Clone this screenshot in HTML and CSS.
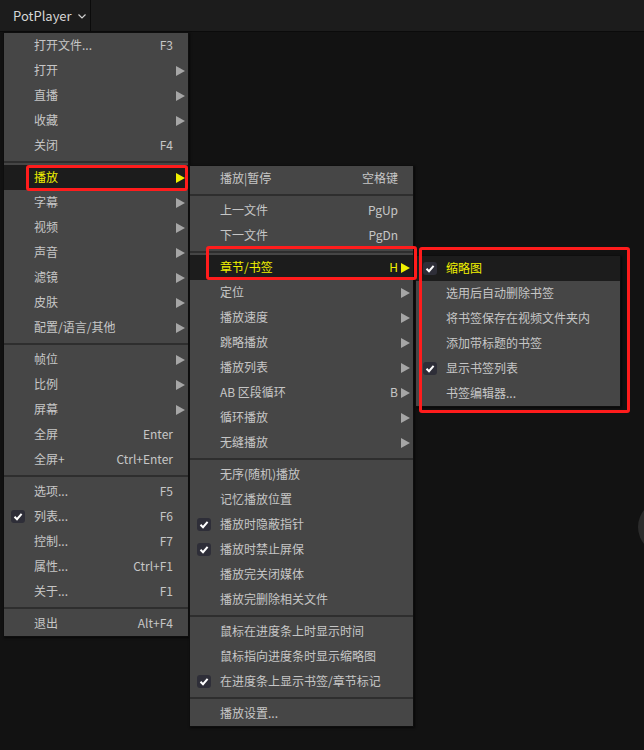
FILE: index.html
```html
<!DOCTYPE html>
<html lang="zh-CN">
<head>
<meta charset="utf-8">
<title>PotPlayer</title>
<link rel="stylesheet" href="styles.css">
</head>
<body>
<header class="topbar">
  <div class="app-btn"><span>PotPlayer</span><svg class="chev" width="8" height="5" viewBox="0 0 8 5"><path d="M0.5 0.5 L4 4 L7.5 0.5" fill="none" stroke="#d0d0d0" stroke-width="1.2"/></svg></div>
  <div class="topbar-rest"></div>
</header>

<div class="fab-clip"><div class="fab"></div></div>

<nav class="menu menu-main">
  <div class="item"><span class="chk"></span><span class="label">打开文件...</span><span class="key">F3</span><span class="sub"></span></div>
  <div class="item"><span class="chk"></span><span class="label">打开</span><span class="key"></span><span class="sub"><i class="arrow"></i></span></div>
  <div class="item"><span class="chk"></span><span class="label">直播</span><span class="key"></span><span class="sub"><i class="arrow"></i></span></div>
  <div class="item"><span class="chk"></span><span class="label">收藏</span><span class="key"></span><span class="sub"><i class="arrow"></i></span></div>
  <div class="item"><span class="chk"></span><span class="label">关闭</span><span class="key">F4</span><span class="sub"></span></div>
  <div class="sep"></div>
  <div class="item active"><span class="chk"></span><span class="label">播放</span><span class="key"></span><span class="sub"><i class="arrow"></i></span></div>
  <div class="item"><span class="chk"></span><span class="label">字幕</span><span class="key"></span><span class="sub"><i class="arrow"></i></span></div>
  <div class="item"><span class="chk"></span><span class="label">视频</span><span class="key"></span><span class="sub"><i class="arrow"></i></span></div>
  <div class="item"><span class="chk"></span><span class="label">声音</span><span class="key"></span><span class="sub"><i class="arrow"></i></span></div>
  <div class="item"><span class="chk"></span><span class="label">滤镜</span><span class="key"></span><span class="sub"><i class="arrow"></i></span></div>
  <div class="item"><span class="chk"></span><span class="label">皮肤</span><span class="key"></span><span class="sub"><i class="arrow"></i></span></div>
  <div class="item"><span class="chk"></span><span class="label">配置/语言/其他</span><span class="key"></span><span class="sub"><i class="arrow"></i></span></div>
  <div class="sep"></div>
  <div class="item"><span class="chk"></span><span class="label">帧位</span><span class="key"></span><span class="sub"><i class="arrow"></i></span></div>
  <div class="item"><span class="chk"></span><span class="label">比例</span><span class="key"></span><span class="sub"><i class="arrow"></i></span></div>
  <div class="item"><span class="chk"></span><span class="label">屏幕</span><span class="key"></span><span class="sub"><i class="arrow"></i></span></div>
  <div class="item"><span class="chk"></span><span class="label">全屏</span><span class="key">Enter</span><span class="sub"></span></div>
  <div class="item"><span class="chk"></span><span class="label">全屏+</span><span class="key">Ctrl+Enter</span><span class="sub"></span></div>
  <div class="sep"></div>
  <div class="item"><span class="chk"></span><span class="label">选项...</span><span class="key">F5</span><span class="sub"></span></div>
  <div class="item"><span class="chk"><svg width="14" height="13" viewBox="0 0 14 13"><rect width="14" height="13" rx="3" fill="#2e2e38"/><path d="M3.5 6.8 L6 9.2 L10.6 3.9" fill="none" stroke="#fff" stroke-width="2"/></svg></span><span class="label">列表...</span><span class="key">F6</span><span class="sub"></span></div>
  <div class="item"><span class="chk"></span><span class="label">控制...</span><span class="key">F7</span><span class="sub"></span></div>
  <div class="item"><span class="chk"></span><span class="label">属性...</span><span class="key">Ctrl+F1</span><span class="sub"></span></div>
  <div class="item"><span class="chk"></span><span class="label">关于...</span><span class="key">F1</span><span class="sub"></span></div>
  <div class="sep"></div>
  <div class="item"><span class="chk"></span><span class="label">退出</span><span class="key">Alt+F4</span><span class="sub"></span></div>
</nav>

<nav class="menu menu-play">
  <div class="item"><span class="chk"></span><span class="label">播放|暂停</span><span class="key">空格键</span><span class="sub"></span></div>
  <div class="sep"></div>
  <div class="item"><span class="chk"></span><span class="label">上一文件</span><span class="key">PgUp</span><span class="sub"></span></div>
  <div class="item"><span class="chk"></span><span class="label">下一文件</span><span class="key">PgDn</span><span class="sub"></span></div>
  <div class="sep"></div>
  <div class="item active"><span class="chk"></span><span class="label">章节/书签</span><span class="key">H</span><span class="sub"><i class="arrow"></i></span></div>
  <div class="item"><span class="chk"></span><span class="label">定位</span><span class="key"></span><span class="sub"><i class="arrow"></i></span></div>
  <div class="item"><span class="chk"></span><span class="label">播放速度</span><span class="key"></span><span class="sub"><i class="arrow"></i></span></div>
  <div class="item"><span class="chk"></span><span class="label">跳略播放</span><span class="key"></span><span class="sub"><i class="arrow"></i></span></div>
  <div class="item"><span class="chk"></span><span class="label">播放列表</span><span class="key"></span><span class="sub"><i class="arrow"></i></span></div>
  <div class="item"><span class="chk"></span><span class="label">AB 区段循环</span><span class="key">B</span><span class="sub"><i class="arrow"></i></span></div>
  <div class="item"><span class="chk"></span><span class="label">循环播放</span><span class="key"></span><span class="sub"><i class="arrow"></i></span></div>
  <div class="item"><span class="chk"></span><span class="label">无缝播放</span><span class="key"></span><span class="sub"><i class="arrow"></i></span></div>
  <div class="sep"></div>
  <div class="item"><span class="chk"></span><span class="label">无序(随机)播放</span><span class="key"></span><span class="sub"></span></div>
  <div class="item"><span class="chk"></span><span class="label">记忆播放位置</span><span class="key"></span><span class="sub"></span></div>
  <div class="item"><span class="chk"><svg width="14" height="13" viewBox="0 0 14 13"><rect width="14" height="13" rx="3" fill="#2e2e38"/><path d="M3.5 6.8 L6 9.2 L10.6 3.9" fill="none" stroke="#fff" stroke-width="2"/></svg></span><span class="label">播放时隐蔽指针</span><span class="key"></span><span class="sub"></span></div>
  <div class="item"><span class="chk"><svg width="14" height="13" viewBox="0 0 14 13"><rect width="14" height="13" rx="3" fill="#2e2e38"/><path d="M3.5 6.8 L6 9.2 L10.6 3.9" fill="none" stroke="#fff" stroke-width="2"/></svg></span><span class="label">播放时禁止屏保</span><span class="key"></span><span class="sub"></span></div>
  <div class="item"><span class="chk"></span><span class="label">播放完关闭媒体</span><span class="key"></span><span class="sub"></span></div>
  <div class="item"><span class="chk"></span><span class="label">播放完删除相关文件</span><span class="key"></span><span class="sub"></span></div>
  <div class="sep"></div>
  <div class="item"><span class="chk"></span><span class="label">鼠标在进度条上时显示时间</span><span class="key"></span><span class="sub"></span></div>
  <div class="item"><span class="chk"></span><span class="label">鼠标指向进度条时显示缩略图</span><span class="key"></span><span class="sub"></span></div>
  <div class="item"><span class="chk"><svg width="14" height="13" viewBox="0 0 14 13"><rect width="14" height="13" rx="3" fill="#2e2e38"/><path d="M3.5 6.8 L6 9.2 L10.6 3.9" fill="none" stroke="#fff" stroke-width="2"/></svg></span><span class="label">在进度条上显示书签/章节标记</span><span class="key"></span><span class="sub"></span></div>
  <div class="sep"></div>
  <div class="item"><span class="chk"></span><span class="label">播放设置...</span><span class="key"></span><span class="sub"></span></div>
</nav>

<nav class="menu menu-mark">
  <div class="item active"><span class="chk"><svg width="14" height="13" viewBox="0 0 14 13"><rect width="14" height="13" rx="3" fill="#2e2e38"/><path d="M3.5 6.8 L6 9.2 L10.6 3.9" fill="none" stroke="#fff" stroke-width="2"/></svg></span><span class="label">缩略图</span><span class="key"></span><span class="sub"></span></div>
  <div class="item"><span class="chk"></span><span class="label">选用后自动删除书签</span><span class="key"></span><span class="sub"></span></div>
  <div class="item"><span class="chk"></span><span class="label">将书签保存在视频文件夹内</span><span class="key"></span><span class="sub"></span></div>
  <div class="item"><span class="chk"></span><span class="label">添加带标题的书签</span><span class="key"></span><span class="sub"></span></div>
  <div class="item"><span class="chk"><svg width="14" height="13" viewBox="0 0 14 13"><rect width="14" height="13" rx="3" fill="#2e2e38"/><path d="M3.5 6.8 L6 9.2 L10.6 3.9" fill="none" stroke="#fff" stroke-width="2"/></svg></span><span class="label">显示书签列表</span><span class="key"></span><span class="sub"></span></div>
  <div class="item"><span class="chk"></span><span class="label">书签编辑器...</span><span class="key"></span><span class="sub"></span></div>
</nav>

<div class="mark mark-play"></div>
<div class="mark mark-chapter"></div>
<div class="mark mark-sub"></div>
</body>
</html>
```

FILE: styles.css
```css
* { box-sizing: border-box; }

html, body {
  margin: 0;
  padding: 0;
}

body {
  position: relative;
  width: 644px;
  height: 750px;
  overflow: hidden;
  background: #121212;
  font-family: "Noto Sans CJK SC", "Noto Sans", sans-serif;
  font-size: 12px;
  color: #c6c6c6;
}

.topbar {
  display: flex;
  height: 32px;
  background: #1c1c1c;
  border-bottom: 1px solid #0b0b0b;
}

.app-btn {
  display: flex;
  align-items: center;
  gap: 6px;
  width: 91px;
  padding-left: 13px;
  border-right: 1px solid #0b0b0b;
  font-size: 13px;
  color: #d6d6d6;
}

.chev { margin-top: 1px; }

.topbar-rest { flex: 1; }

.fab-clip {
  position: absolute;
  left: 638px;
  top: 500px;
  width: 6px;
  height: 54px;
  overflow: hidden;
}

.fab {
  width: 54px;
  height: 54px;
  border-radius: 50%;
  background: #2b2b2b;
}

.menu {
  position: absolute;
  display: flex;
  flex-direction: column;
  background: #464646;
  border: 1px solid #0e0e0e;
  box-shadow: 1px 1px 2px rgba(0, 0, 0, 0.6);
}

.menu-main { left: 3px; top: 32px; width: 186px; }
.menu-play { left: 189px; top: 165px; width: 225px; }
.menu-mark { left: 415px; top: 255px; width: 206px; }

.item {
  display: grid;
  grid-template-columns: 30px 1fr auto 15px;
  align-items: center;
  height: 25px;
  white-space: nowrap;
}

.label, .key {
  line-height: 23px;
  padding-bottom: 2px;
}

.item.active {
  background: #1c1c1c;
  color: #f0f000;
}

.chk {
  display: flex;
  align-items: center;
  padding-left: 7px;
  height: 25px;
}

.chk svg { display: block; }

.key { text-align: right; }

.sub {
  display: flex;
  align-items: center;
  height: 25px;
}

.arrow {
  display: block;
  margin-left: 3px;
  width: 0;
  height: 0;
  border-left: 9px solid #a6a6a6;
  border-top: 5px solid transparent;
  border-bottom: 5px solid transparent;
}

.item.active .arrow { border-left-color: #f0f000; }

.sep {
  height: 7px;
  display: flex;
  align-items: center;
}

.sep::before {
  content: "";
  display: block;
  width: 100%;
  height: 2px;
  background: #2e2e2e;
}

.mark {
  position: absolute;
  border: 3px solid #ff1c1c;
  border-radius: 3px;
}

.mark-play { left: 26px; top: 165px; width: 162px; height: 26px; }
.mark-chapter { left: 206px; top: 246px; width: 211px; height: 34px; }
.mark-sub { left: 419px; top: 247px; width: 211px; height: 166px; }
```
